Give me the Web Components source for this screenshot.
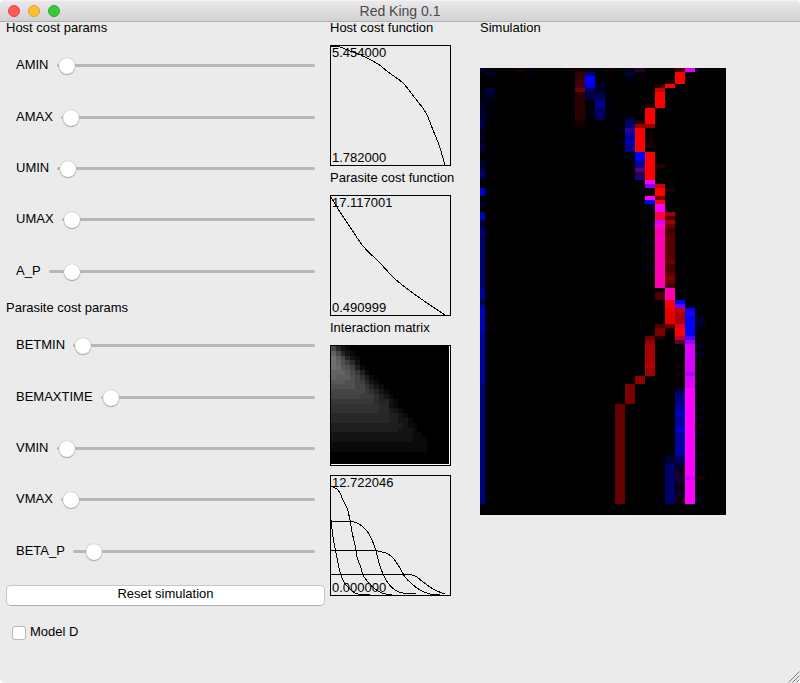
<!DOCTYPE html>
<html lang="en">
<head>
<meta charset="utf-8">
<title>Red King 0.1</title>
<style>
  body { margin: 0; background: #fff; font: 13px/15px "Liberation Sans", Arial, sans-serif; color: #000; }
</style>
</head>
<body>
<app-window caption="Red King 0.1">
  <control-panel slot="controls"></control-panel>
  <chart-column slot="charts"></chart-column>
  <simulation-view slot="simulation"></simulation-view>
</app-window>

<script>
function attach(host, html) {
  const root = host.attachShadow({ mode: 'open' });
  const t = document.createElement('template');
  t.innerHTML = html;
  root.append(t.content.cloneNode(true));
  return root;
}

customElements.define('app-window', class extends HTMLElement {
  constructor() {
    super();
    attach(this, `
      <style>
        :host { display: flex; flex-direction: column; min-height: 100vh; background: #ebebeb; border-radius: 5px; overflow: hidden; position: relative; }
        header { display: grid; grid-template-columns: 1fr auto 1fr; align-items: center; height: 22px; box-sizing: border-box; padding: 0 8px;
          background: linear-gradient(#ebe8eb, #d3d2d3); border-top: 1px solid #f4f2f4; border-bottom: 1px solid #b1b0b1; }
        .lights { display: flex; gap: 8px; }
        .lights button { width: 12px; height: 12px; padding: 0; border-radius: 50%; border: 1px solid var(--rim); background: var(--fill); }
        .close { --fill: #fc5b57; --rim: #df4744; }
        .min { --fill: #fdbf2d; --rim: #de9f2f; }
        .max { --fill: #38ca3c; --rim: #2ead32; }
        h1 { margin: 0; font: inherit; font-size: 14px; color: #4a4a4a; }
        main { display: grid; grid-template-columns: 330fr 150fr 320fr; flex: 1; }
        .grip { position: absolute; right: 0; bottom: 0; display: block; }
      </style>
      <header>
        <div class="lights">
          <button class="close" aria-label="Close"></button>
          <button class="min" aria-label="Minimize"></button>
          <button class="max" aria-label="Zoom"></button>
        </div>
        <h1></h1>
      </header>
      <main>
        <slot name="controls"></slot>
        <slot name="charts"></slot>
        <slot name="simulation"></slot>
      </main>
      <svg class="grip" width="12" height="12" viewBox="0 0 12 12" stroke="#777" fill="none"><path d="M.5 11.5 11.5.5M4.500 11.5 11.5 4.500M8.500 11.5 11.5 8.500"/></svg>
    `).querySelector('h1').textContent = this.getAttribute('caption');
  }
});

customElements.define('param-slider', class extends HTMLElement {
  connectedCallback() {
    if (this.shadowRoot) return;
    const root = attach(this, `
      <style>
        :host { display: flex; align-items: center; gap: 8px; padding: 0 10px; }
        label { padding-bottom: 2px; }
        input { appearance: none; -webkit-appearance: none; flex: 1; min-width: 0; height: 16px; margin: 0; background: none; }
        input::-webkit-slider-runnable-track { height: 3px; border-radius: 2px; background: #b7b7b7; }
        input::-webkit-slider-thumb { -webkit-appearance: none; width: 16px; height: 16px; margin-top: -6px; border-radius: 50%; background: #fff;
          box-shadow: 0 0 1px #888, 0 1px 1px #aaa; }
      </style>
      <label for="range"></label>
      <input id="range" type="range" min="0" max="100">
    `);
    root.querySelector('label').textContent = this.getAttribute('name');
    root.querySelector('input').value = this.getAttribute('value');
  }
});

customElements.define('control-panel', class extends HTMLElement {
  constructor() {
    super();
    attach(this, `
      <style>
        :host { display: flex; flex-direction: column; padding: 0 5px 0 6px; }
        h2 { margin: 0; font: inherit; line-height: 12px; }
        .group { display: grid; grid-auto-rows: 1fr; min-height: 257px; margin: 6px 0 5px; }
        button { height: 21px; margin-top: 3px; padding: 0 0 4px; font: inherit; background: #fff; color: #000;
          border: 1px solid #c6c6c6; border-bottom-color: #adadad; border-radius: 5px; }
        .check { display: flex; align-items: center; gap: 4px; margin: 18px 6px 0; }
        .check label { padding-bottom: 1px; }
        .check input { appearance: none; width: 14px; height: 14px; margin: 2px 0 0; box-sizing: border-box; background: #fff; border: 1px solid #b9b9b9; border-radius: 3px; }
      </style>
      <h2>Host cost params</h2>
      <div class="group">
        <param-slider name="AMIN" value="1"></param-slider>
        <param-slider name="AMAX" value="1"></param-slider>
        <param-slider name="UMIN" value="1"></param-slider>
        <param-slider name="UMAX" value="1"></param-slider>
        <param-slider name="A_P" value="6"></param-slider>
      </div>
      <h2>Parasite cost params</h2>
      <div class="group">
        <param-slider name="BETMIN" value="1"></param-slider>
        <param-slider name="BEMAXTIME" value="1"></param-slider>
        <param-slider name="VMIN" value="1"></param-slider>
        <param-slider name="VMAX" value="1"></param-slider>
        <param-slider name="BETA_P" value="6"></param-slider>
      </div>
      <button type="button">Reset simulation</button>
      <div class="check"><input id="model" type="checkbox"><label for="model">Model D</label></div>
    `);
  }
});

// Smooth path through points that run left to right.
function curve(list) {
  const p = list.split(' ').map(s => s.split(',').map(Number));
  const slope = p.map((_, i) => {
    const a = p[Math.max(i - 1, 0)], b = p[Math.min(i + 1, p.length - 1)];
    return (b[1] - a[1]) / (b[0] - a[0]);
  });
  let d = `M${p[0]}`;
  for (let i = 1; i < p.length; i++) {
    const [x0, y0] = p[i - 1], [x1, y1] = p[i], h = (x1 - x0) / 3;
    d += y0 === y1 ? `L${x1},${y1}` : `C${x0 + h},${y0 + h * slope[i - 1]} ${x1 - h},${y1 - h * slope[i]} ${x1},${y1}`;
  }
  return d;
}

customElements.define('line-chart', class extends HTMLElement {
  connectedCallback() {
    if (this.shadowRoot) return;
    const lines = this.getAttribute('lines').split(';')
      .map(p => `<path d="${curve(p)}"/>`).join('');
    attach(this, `
      <style>
        :host { display: block; }
        svg { display: block; font: inherit; }
        .plot { fill: none; stroke: #000; shape-rendering: crispEdges; }
      </style>
      <svg width="121" height="121" viewBox="0 0 121 121">
        <g class="plot"><rect x=".5" y=".5" width="120" height="120"/>${lines}</g>
        <text x="2" y="12">${this.getAttribute('high')}</text>
        <text x="2" y="117">${this.getAttribute('low')}</text>
      </svg>
    `);
  }
});

// Each row lists "grey level * run length"; levels are two hex digits.
const MATRIX = [
  '48 28 14 0a', '62 48 28 14 0a', '70 5c 48 28 14 0a', '70 62 50 40 28 12',
  '70 68 58 50 40 20 0a', '64*3 58 48 38 20 0a', '64 5c*3 50 44 30 1c 0a',
  '58*3 50*2 44 3c 28 14 0a', '50*5 44*2 34 24 14 0a', '46*7 3c 30 24 14 0a',
  '44*6 3c*3 30 20 14 0a', '38*9 2c 24*2 14 0a', '32*10 28*2 10 0a',
  '32*10 28*2 1c 14 0a', '28*12 20*2 14 0a', '28*12 20*2 14*2 0a',
  '1e*15 14 0a*2', '1e*14 14*3 0a', '14*17 0a*2', '14*17 0a*3', '0a*20', '0a*20'
];

customElements.define('interaction-matrix', class extends HTMLElement {
  constructor() {
    super();
    const edge = n => Math.round(n * 4.8);
    let cells = '';
    MATRIX.forEach((row, r) => {
      let c = 0;
      row.split(' ').forEach(run => {
        const [g, n = '1'] = run.split('*');
        const end = c + Number(n);
        cells += `<rect x="${1 + edge(c)}" y="${1 + edge(r)}" width="${edge(end) - edge(c)}" height="${edge(r + 1) - edge(r)}" fill="#${g}${g}${g}"/>`;
        c = end;
      });
    });
    attach(this, `
      <style>:host { display: block; } svg { display: block; }</style>
      <svg width="121" height="121" viewBox="0 0 121 121" shape-rendering="crispEdges" role="img" aria-label="Interaction matrix">
        <rect width="121" height="121"/><rect x="1" y="1" width="119" height="119" fill="#fff"/><rect x="1" y="1" width="118" height="118"/>
        ${cells}
      </svg>
    `);
  }
});

customElements.define('chart-column', class extends HTMLElement {
  constructor() {
    super();
    attach(this, `
      <style>
        :host { display: block; }
        h2 { margin: 0 0 11px; font: inherit; line-height: 12px; white-space: nowrap; }
        section { margin-bottom: 6px; }
        section:nth-of-type(3) { margin-bottom: 9px; }
      </style>
      <section><h2>Host cost function</h2>
        <line-chart high="5.454000" low="1.782000" lines="1,1 10,2 20,6 33,11 48,19 58,27 73,38 85,53 96,68 103,85 109,100 115,120"></line-chart></section>
      <section><h2>Parasite cost function</h2>
        <line-chart high="17.117001" low="0.490999" lines="1,2 10,17 20,32 33,51 50,68 64,83 80,96 100,110 115,120"></line-chart></section>
      <section><h2>Interaction matrix</h2><interaction-matrix></interaction-matrix></section>
      <section>
        <line-chart high="12.722046" low="0.000000" lines="1,11 3,12 7,14 10,18 13,25 17,33 20,45 22,57 25,70 27,82 31,93 33,100 38,107 45,114 52,118 62,120;1,46.500 20,46.500 27,48 32,51 37,56 42,65 46,76 49,88 53,99 58,108 65,115 73,118 86,119;1,75.500 45,75.500 52,77 58,79 63,83 70,93 75,102 82,109 90,115 100,119 110,120;1,99.500 75,99.500 82,100 87,102 93,107 100,112 107,116 115,119;1,45 3,62 6,78 9,93 12,103 16,110 22,116 28,119 40,120"></line-chart></section>
    `);
  }
});

// Column index -> list of "first row[-end row]:rgb".
const TRACE = {
  0: '0:000033 6-8:000010 8-10:00001f 10-13:000030 13-15:000048 15:000028 16:000010 17:000035 18:000010 19-21:000038 23-25:000035 25:000058 26:000070 27:000048 30-32:0000c8 33-35:000020 36-38:0000b4 38-40:000048 40-55:000070 55-58:000098 58:000050 59:000098 60-66:0000c0 66-79:0000a0 79-109:000080',
  1: '1:000030 5:000040 6:000030 7:00001c 8-13:00000c 19:000008 26:00000c 30-32:00000c 45:00000c 65:000010 74:00000c 76:00000c 89:00000c',
  4: '0:120000', 5: '1:00001c', 9: '0:0a0000',
  10: '0:0a0004 1-3:360000 3:460000 4:400014 5:6e000a 6-13:280000 13:1c0000 14:0c0000',
  11: '0:000010 1:000078 2-4:0000ff 4:0000d0 5:000060 6:000046 7:00003c 8-11:000008 11:000014',
  12: '0:00000c 3:000010 4:000030 5:00001c 6:000048 7:00005a 8-10:000090 10-12:00006c 12:000058',
  13: '0:140000 8-13:000008',
  14: '0:00000c 13:000008 15:000010 18:000010 84-109:640000',
  15: '0:000018 1:000040 2-4:00000c 12:000020 13:000068 14:000070 15:2c0090 16:0000b4 17:000090 18:0000b8 19-21:000088 22:000014 25:00000c 78:080000 79-84:780000',
  16: '0:280028 13:280000 14:980000 15-21:ff0000 21-23:0000ff 23:0000b4 24:000088 25:580080 26:280050 27:200078 76:080000 77-79:900000',
  17: '9:200000 10-14:ff0000 14:980000 16-18:060000 18-20:160000 21-28:ff0000 28:ff00ff 29:8000ff 30:080008 31:0c0000 32:ff00ff 33:0000ff 34:00001c 35:000004 39:000010 43:000010 46:000010 49-51:000010 67:6c0000 68:980000 69-74:a80000 74:b80000 75-77:a00000',
  18: '4:280000 5:d00000 6-10:ff0000 24:280000 29:d00000 30-32:ff0000 32:780000 33:ff0018 34-36:ff00ff 36-38:ff0040 38:d800ff 39:ff00d8 40-55:ff00b0 55:080000 56:480010 57:480000 64:500000 65-67:780000 67:200000',
  19: '3:200000 4:ff0000 30:200000 36:a00000 37:480000 38:a00000 39:700000 40:400000 41:500000 42-48:580000 48:700000 49-51:480000 51:600000 52:800000 53:600000 54:480010 55-58:ff00b0 58-60:ff0000 60-64:e40000 64:600000 65:180000 97-99:000038 99-109:000068',
  20: '0:480000 1-4:ff0000 57:00000c 58:0000ff 59:6000ff 60:c80000 61-63:a80000 63:b80000 64:d80030 65-67:ff0000 67:c00030 68:580030 74:100000 76:140000 80:000038 81-84:00007c 84-86:0000a0 86:0000c0 87-90:0000a8 90:0000c8 91-97:0000a0 97:000060 98:000050 99:000028 100:000020 101:180010 102:100030 103:100028 104:00001c 105:080008 106:100028 107-109:100010',
  21: '0:e000ff 59:00001c 60:0000ff 61:1a00ff 62-67:0000ff 67:5000ff 68:9c00ff 69-76:d800ff 76:b400ff 77-80:e000ff 80-102:ff00ff 102:dc00ff 103-109:ff00ff',
  22: '0:000010 62-64:000030 64:000018 65:000008 69:000028 71:000028 85:000018 87:000018 89:0c0000 91:00001c 96:000018 99:000014 100:000010 102:180000 107-109:000014'
};

customElements.define('simulation-view', class extends HTMLElement {
  constructor() {
    super();
    let cells = '';
    for (const [col, runs] of Object.entries(TRACE)) {
      const x = Number(col) ? Number(col) * 10 - 5 : 0;
      const w = Number(col) ? 10 : 5;
      for (const run of runs.split(' ')) {
        const [rows, color] = run.split(':');
        const [a, b = Number(rows) + 1] = rows.split('-');
        cells += `<rect x="${x}" y="${a * 4}" width="${w}" height="${(b - a) * 4}" fill="#${color}"/>`;
      }
    }
    attach(this, `
      <style>
        :host { display: block; }
        h2 { margin: 0 0 34px; font: inherit; line-height: 12px; }
        svg { display: block; background: #000; }
      </style>
      <h2>Simulation</h2>
      <svg width="246" height="447" viewBox="0 0 246 447" shape-rendering="crispEdges" role="img" aria-label="Simulation">${cells}</svg>
    `);
  }
});
</script>
</body>
</html>
